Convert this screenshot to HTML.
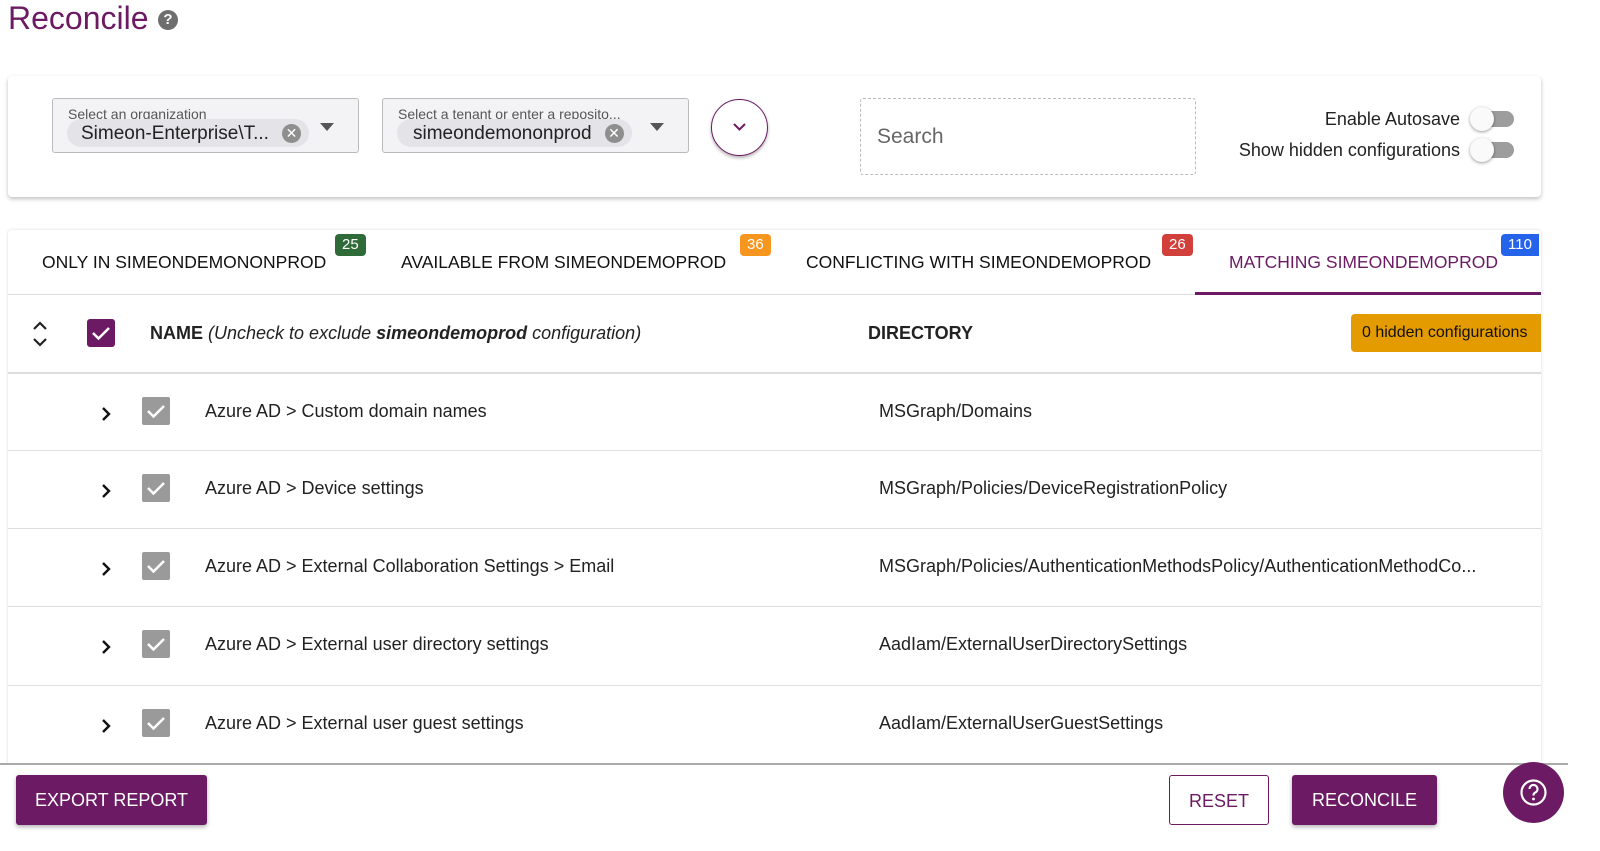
<!DOCTYPE html>
<html><head><meta charset="utf-8"><style>
*{box-sizing:border-box;margin:0;padding:0}
body{width:1600px;height:851px;background:#fff;font-family:"Liberation Sans",sans-serif;position:relative;overflow:hidden;color:#222}
.a{position:absolute}
.card{position:absolute;background:#fff;box-shadow:0 2px 4px rgba(0,0,0,.25);border-radius:4px}
.sel{position:absolute;top:98px;height:55px;border:1px solid #bbb;border-radius:3px;background:#f3f2f5}
.sel .l{position:absolute;left:15px;top:7px;font-size:14px;color:#555}
.chip{position:absolute;left:14px;top:20px;height:28px;border-radius:14px;background:#e4e3e7;font-size:19px;padding:4px 40px 0 14px;color:#222}
.chip i{position:absolute;right:8px;top:5px;width:19px;height:19px;border-radius:50%;background:#8e8e8e;color:#fff;font-style:normal;font-size:14px;text-align:center;line-height:19px}
.tri{position:absolute;top:24px;width:0;height:0;border-left:7px solid transparent;border-right:7px solid transparent;border-top:8px solid #555}
.tab{position:absolute;top:252px;font-size:17.5px;color:#111}
.bd{position:absolute;top:234px;height:22px;border-radius:4px;color:#fff;font-size:15px;text-align:center;line-height:22px;padding:0 7px}
.row{position:absolute;left:8px;width:1533px;height:78px;border-top:1px solid #ddd;font-size:18px}
.row .c{position:absolute;left:134px;top:23px;width:28px;height:28px;background:#9a9a9a;border-radius:2px}
.row .n{position:absolute;left:197px;top:27px}
.row .d{position:absolute;left:871px;top:27px;white-space:nowrap}
.row .e{position:absolute;left:92px;top:32px}
.tg{position:absolute;width:44px;height:20px}
.tg .t{position:absolute;left:10px;top:2px;width:34px;height:16px;border-radius:8px;background:#9d9d9d}
.tg .k{position:absolute;left:0;top:-2px;width:24px;height:24px;border-radius:50%;background:#fafafa;box-shadow:0 1px 3px rgba(0,0,0,.4)}
.btn{position:absolute;top:775px;height:50px;font-size:18px;line-height:50px;text-align:center;border-radius:3px}
</style></head><body>
<div class="a" style="left:8px;top:0;font-size:32px;color:#6b1a63">Reconcile</div>
<div class="a" style="left:158px;top:10px;width:20px;height:20px;border-radius:50%;background:#6e6e6e;color:#fff;font-size:15px;font-weight:bold;text-align:center;line-height:20px">?</div>

<div class="card" style="left:8px;top:76px;width:1533px;height:121px"></div>
<div class="sel" style="left:52px;width:307px"><div class="l">Select an organization</div><div class="chip">Simeon-Enterprise\T...<i>✕</i></div><div class="tri" style="left:267px"></div></div>
<div class="sel" style="left:382px;width:307px"><div class="l">Select a tenant or enter a reposito...</div><div class="chip" style="padding-left:16px">simeondemononprod<i>✕</i></div><div class="tri" style="left:267px"></div></div>
<div class="a" style="left:711px;top:99px;width:57px;height:57px;border-radius:50%;border:1.5px solid #6b1a63;background:#fff;box-shadow:0 2px 3px rgba(0,0,0,.3)">
<svg width="57" height="57" style="position:absolute;left:-1px;top:-1px"><path d="M23 25 L28.5 30.5 L34 25" stroke="#6b1a63" stroke-width="2" fill="none"/></svg></div>
<div class="a" style="left:860px;top:98px;width:336px;height:77px;border:1px dashed #bbb;border-radius:3px;font-size:21px;color:#666;padding:26px 0 0 16px">Search</div>
<div class="a" style="right:140px;top:109px;font-size:18px">Enable Autosave</div>
<div class="a" style="right:140px;top:140px;font-size:18px">Show hidden configurations</div>
<div class="tg" style="left:1470px;top:109px"><div class="t"></div><div class="k"></div></div>
<div class="tg" style="left:1470px;top:140px"><div class="t"></div><div class="k"></div></div>

<div class="card" style="left:8px;top:230px;width:1533px;height:560px;box-shadow:0 0 3px rgba(0,0,0,.15)"></div>
<div class="tab" style="left:42px">ONLY IN SIMEONDEMONONPROD</div><div class="bd" style="left:335px;background:#2e6b38">25</div>
<div class="tab" style="left:401px">AVAILABLE FROM SIMEONDEMOPROD</div><div class="bd" style="left:740px;background:#f7961e">36</div>
<div class="tab" style="left:806px">CONFLICTING WITH SIMEONDEMOPROD</div><div class="bd" style="left:1162px;background:#d1403b">26</div>
<div class="tab" style="left:1229px;color:#6b1a63">MATCHING SIMEONDEMOPROD</div><div class="bd" style="left:1501px;background:#2563eb;border-radius:4px 0 0 4px">110</div>
<div class="a" style="left:8px;top:294px;width:1533px;height:1px;background:#ddd"></div>
<div class="a" style="left:1195px;top:292px;width:346px;height:3px;background:#6b1a63"></div>

<svg class="a" style="left:30px;top:320px" width="20" height="28"><path d="M4 9 L10 3 L16 9 M4 19 L10 25 L16 19" stroke="#222" stroke-width="2.2" fill="none"/></svg>
<div class="a" style="left:87px;top:319px;width:28px;height:28px;background:#6b1a63;border-radius:3px"><svg width="28" height="28"><path d="M6 14 L11.5 19.5 L22 9" stroke="#fff" stroke-width="2.5" fill="none"/></svg></div>
<div class="a" style="left:150px;top:323px;font-size:18px"><b>NAME</b> <i>(Uncheck to exclude <b>simeondemoprod</b> configuration)</i></div>
<div class="a" style="left:868px;top:323px;font-size:18px;font-weight:bold">DIRECTORY</div>
<div class="a" style="left:1351px;top:314px;width:190px;height:38px;background:#e39b00;border-radius:4px 0 0 4px;font-size:16px;line-height:38px;padding-left:11px;color:#111">0 hidden configurations</div>

<div class="row" style="top:372px;border-top:2px solid #ddd"><svg class="e" width="12" height="16"><path d="M3 2 L9 8 L3 14" stroke="#111" stroke-width="2.4" fill="none"/></svg><div class="c"><svg width="28" height="28"><path d="M6 14 L11.5 19.5 L22 9" stroke="#fff" stroke-width="2.5" fill="none"/></svg></div><div class="n">Azure AD &gt; Custom domain names</div><div class="d">MSGraph/Domains</div></div>
<div class="row" style="top:450px"><svg class="e" width="12" height="16"><path d="M3 2 L9 8 L3 14" stroke="#111" stroke-width="2.4" fill="none"/></svg><div class="c"><svg width="28" height="28"><path d="M6 14 L11.5 19.5 L22 9" stroke="#fff" stroke-width="2.5" fill="none"/></svg></div><div class="n">Azure AD &gt; Device settings</div><div class="d">MSGraph/Policies/DeviceRegistrationPolicy</div></div>
<div class="row" style="top:528px"><svg class="e" width="12" height="16"><path d="M3 2 L9 8 L3 14" stroke="#111" stroke-width="2.4" fill="none"/></svg><div class="c"><svg width="28" height="28"><path d="M6 14 L11.5 19.5 L22 9" stroke="#fff" stroke-width="2.5" fill="none"/></svg></div><div class="n">Azure AD &gt; External Collaboration Settings &gt; Email</div><div class="d">MSGraph/Policies/AuthenticationMethodsPolicy/AuthenticationMethodCo...</div></div>
<div class="row" style="top:606px"><svg class="e" width="12" height="16"><path d="M3 2 L9 8 L3 14" stroke="#111" stroke-width="2.4" fill="none"/></svg><div class="c"><svg width="28" height="28"><path d="M6 14 L11.5 19.5 L22 9" stroke="#fff" stroke-width="2.5" fill="none"/></svg></div><div class="n">Azure AD &gt; External user directory settings</div><div class="d">AadIam/ExternalUserDirectorySettings</div></div>
<div class="row" style="top:685px"><svg class="e" width="12" height="16"><path d="M3 2 L9 8 L3 14" stroke="#111" stroke-width="2.4" fill="none"/></svg><div class="c"><svg width="28" height="28"><path d="M6 14 L11.5 19.5 L22 9" stroke="#fff" stroke-width="2.5" fill="none"/></svg></div><div class="n">Azure AD &gt; External user guest settings</div><div class="d">AadIam/ExternalUserGuestSettings</div></div>

<div class="a" style="left:0;top:763px;width:1568px;height:88px;background:#fff;border-top:2px solid #aaa"></div>
<div class="btn" style="left:16px;width:191px;background:#6b1a63;color:#fff;box-shadow:0 2px 4px rgba(0,0,0,.3)">EXPORT REPORT</div>
<div class="btn" style="left:1169px;width:100px;border:1.5px solid #6b1a63;color:#6b1a63;background:#fff">RESET</div>
<div class="btn" style="left:1292px;width:145px;background:#6b1a63;color:#fff;box-shadow:0 2px 4px rgba(0,0,0,.3)">RECONCILE</div>
<div class="a" style="left:1503px;top:762px;width:61px;height:61px;border-radius:50%;background:#6b1a63"><svg width="61" height="61"><circle cx="30.5" cy="30.5" r="12" stroke="#fff" stroke-width="2.2" fill="none"/><path d="M26.5 27 a4 4 0 1 1 5.5 3.7 c-1.2.6-1.5 1.2-1.5 2.8" stroke="#fff" stroke-width="2.2" fill="none"/><circle cx="30.5" cy="37" r="1.4" fill="#fff"/></svg></div>
</body></html>
